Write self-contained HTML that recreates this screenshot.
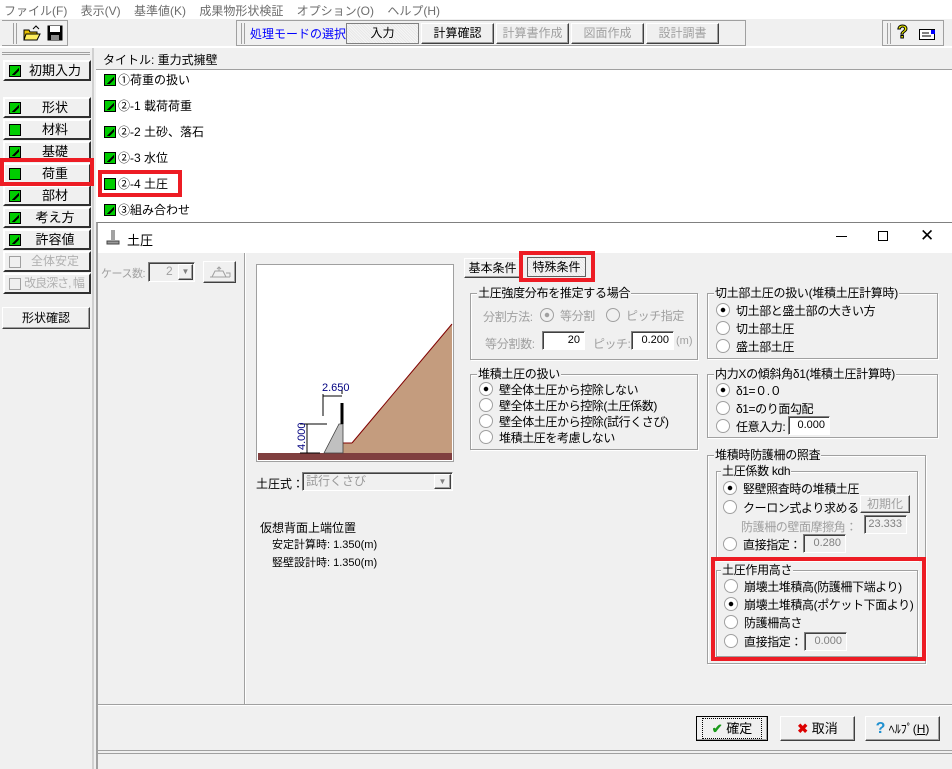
<!DOCTYPE html>
<html><head><meta charset="utf-8"><style>
*{margin:0;padding:0;box-sizing:border-box}
body{width:952px;height:769px;position:relative;overflow:hidden;background:#f0f0f0;font-family:"Liberation Sans","Noto Sans CJK JP",sans-serif;font-size:12px;color:#000}
.a{position:absolute;white-space:nowrap}
.btn{position:absolute;background:#f0f0f0;border:1px solid;border-color:#fff #404040 #404040 #fff;box-shadow:inset -1px -1px 0 #a0a0a0;text-align:center}
.lb{position:absolute;left:3px;width:88px;height:21px;background:#f0f0f0;border:2px solid #000;border-top-color:#fff;border-left-color:#fff;border-right-color:#303030;border-bottom-color:#303030;font-size:13px;line-height:17px;text-align:center;padding-left:16px}
.ck{display:inline-block;width:12px;height:12px;background:#0c0;border:1px solid #000;vertical-align:-2px;margin-right:2px;position:relative}
.ck.c::after{content:"";position:absolute;left:1px;top:1px;width:8px;height:8px;background:linear-gradient(135deg,transparent 55%,#000 55%,#000 72%,transparent 72%)}
.grp{position:absolute;border:1px solid #a0a0a0;box-shadow:1px 1px 0 #fff inset,1px 1px 0 #fff}
.grp>.t{position:absolute;top:-8px;left:6px;background:#f0f0f0;padding:0 1px;line-height:14px;letter-spacing:-0.3px}
.r{position:absolute;white-space:nowrap;line-height:14px;letter-spacing:-0.4px}
.r::before{content:"";display:inline-block;width:12px;height:12px;border-radius:50%;background:#fff;border:1px solid #a0a0a0;vertical-align:-2px;margin-right:6px}
.r.on::before{background:radial-gradient(circle,#000 2px,#fff 2.5px)}
.dis{color:#a0a0a0}
.dis.r::before{background:#f0f0f0}
.dis.r.on::before{background:radial-gradient(circle,#a0a0a0 2px,#f0f0f0 2.5px)}
.inp{position:absolute;background:#fff;border:1px solid;border-color:#808080 #fff #fff #808080;box-shadow:inset 1px 1px 0 #404040;text-align:right;padding-right:4px;line-height:17px;font-size:11px}
.inp.d{background:#f0f0f0;color:#808080}
.red{position:absolute;border:4px solid #ed1c24}
</style></head><body>
<div class="a" style="left:0;top:0;width:952px;height:19px;background:#fff"></div>
<div class="a" style="left:4px;top:2px;color:#6d6d6d;font-size:12px">ファイル(F)&nbsp;&nbsp;&nbsp;&nbsp;表示(V)&nbsp;&nbsp;&nbsp;&nbsp;基準値(K)&nbsp;&nbsp;&nbsp;&nbsp;成果物形状検証&nbsp;&nbsp;&nbsp;&nbsp;オプション(O)&nbsp;&nbsp;&nbsp;&nbsp;ヘルプ(H)</div>
<div class="a" style="left:0;top:19px;width:952px;height:29px;background:#f0f0f0;border-bottom:2px solid #fff"></div>
<div class="a" style="left:2px;top:20px;width:66px;height:26px;border:1px solid #a0a0a0;border-left:none"></div>
<div class="a" style="left:13px;top:23px;width:4px;height:21px;border-left:1px solid #a0a0a0;border-right:1px solid #a0a0a0"></div>
<svg class="a" style="left:23px;top:25px" width="18" height="16"><path d="M1 5h5l1 2h7v8H1z" fill="#e8c000" stroke="#000"/><path d="M3 9h14l-3 6H1z" fill="#ffef60" stroke="#000"/><path d="M10 4l3-3 3 3" fill="none" stroke="#000"/></svg>
<svg class="a" style="left:47px;top:25px" width="16" height="16"><rect x="0.5" y="0.5" width="15" height="15" fill="#000"/><rect x="3" y="1" width="10" height="6" fill="#fff"/><rect x="4" y="10" width="8" height="5" fill="#888"/></svg>
<div class="a" style="left:236px;top:20px;width:510px;height:26px;border:1px solid #a0a0a0"></div>
<div class="a" style="left:241px;top:23px;width:4px;height:21px;border-left:1px solid #a0a0a0;border-right:1px solid #a0a0a0"></div>
<div class="a" style="left:250px;top:25px;color:#0000ff;font-size:12px">処理モードの選択</div>
<div class="a" style="left:346px;top:23px;width:73px;height:21px;border:1px solid #808080;background:repeating-linear-gradient(45deg,#e8e8e8 0 1px,#f6f6f6 1px 2px);text-align:center;line-height:19px">入力</div>
<div class="btn" style="left:421px;top:23px;width:73px;height:21px;line-height:19px">計算確認</div>
<div class="btn" style="left:496px;top:23px;width:73px;height:21px;line-height:19px;color:#a0a0a0">計算書作成</div>
<div class="btn" style="left:571px;top:23px;width:73px;height:21px;line-height:19px;color:#a0a0a0">図面作成</div>
<div class="btn" style="left:646px;top:23px;width:73px;height:21px;line-height:19px;color:#a0a0a0">設計調書</div>
<div class="a" style="left:882px;top:20px;width:62px;height:26px;border:1px solid #a0a0a0"></div>
<div class="a" style="left:887px;top:23px;width:4px;height:21px;border-left:1px solid #a0a0a0;border-right:1px solid #a0a0a0"></div>
<div class="a" style="left:897px;top:22px;font-size:18px;font-weight:bold;color:#ee0;-webkit-text-stroke:1px #000">?</div>
<svg class="a" style="left:919px;top:29px" width="18" height="12"><rect x="0.5" y="0.5" width="15" height="10" fill="#fff" stroke="#000"/><path d="M3 4h7M3 7h9" stroke="#000"/><rect x="12" y="1" width="4" height="4" fill="#00f"/></svg>
<div class="a" style="left:0;top:48px;width:94px;height:721px;background:#f0f0f0;border-right:2px solid #d0d0d0"></div>
<div class="a" style="left:2px;top:52px;width:88px;height:3px;border-top:1px solid #a0a0a0;border-bottom:1px solid #a0a0a0"></div>
<div class="lb" style="top:60px"><span class="ck c" style="position:absolute;left:4px;top:3px"></span>初期入力</div>
<div class="lb" style="top:97px"><span class="ck c" style="position:absolute;left:4px;top:3px"></span>形状</div>
<div class="lb" style="top:119px"><span class="ck" style="position:absolute;left:4px;top:3px"></span>材料</div>
<div class="lb" style="top:141px"><span class="ck c" style="position:absolute;left:4px;top:3px"></span>基礎</div>
<div class="lb" style="top:163px"><span class="ck" style="position:absolute;left:4px;top:3px"></span>荷重</div>
<div class="lb" style="top:185px"><span class="ck c" style="position:absolute;left:4px;top:3px"></span>部材</div>
<div class="lb" style="top:207px"><span class="ck c" style="position:absolute;left:4px;top:3px"></span>考え方</div>
<div class="lb" style="top:229px"><span class="ck c" style="position:absolute;left:4px;top:3px"></span>許容値</div>
<div class="lb" style="top:251px;color:#b0b0b0;font-size:12px"><span class="ck" style="position:absolute;left:4px;top:3px;background:#f0f0f0;border-color:#a0a0a0"></span>全体安定</div>
<div class="lb" style="top:273px;color:#b0b0b0;font-size:12px;letter-spacing:-1px;padding-left:14px"><span class="ck" style="position:absolute;left:4px;top:3px;background:#f0f0f0;border-color:#a0a0a0"></span>改良深さ, 幅</div>
<div class="red" style="left:0;top:158px;width:94px;height:28px"></div>
<div class="btn" style="left:2px;top:307px;width:88px;height:22px;line-height:20px">形状確認</div>
<div class="a" style="left:96px;top:48px;width:856px;height:22px;background:#f0f0f0;border-bottom:1px solid #a0a0a0;padding:3px 7px">タイトル: 重力式擁壁</div>
<div class="a" style="left:96px;top:70px;width:856px;height:152px;background:#fff"></div>
<div class="a" style="left:104px;top:73px;line-height:14px"><span class="ck c"></span>①荷重の扱い</div>
<div class="a" style="left:104px;top:99px;line-height:14px"><span class="ck c"></span>②-1 載荷荷重</div>
<div class="a" style="left:104px;top:125px;line-height:14px"><span class="ck c"></span>②-2 土砂、落石</div>
<div class="a" style="left:104px;top:151px;line-height:14px"><span class="ck c"></span>②-3 水位</div>
<div class="a" style="left:104px;top:177px;line-height:14px"><span class="ck"></span>②-4 土圧</div>
<div class="a" style="left:104px;top:203px;line-height:14px"><span class="ck c"></span>③組み合わせ</div>
<div class="red" style="left:98px;top:170px;width:84px;height:27px"></div>
<div class="a" style="left:96px;top:222px;width:856px;height:547px;background:#f0f0f0;border-left:2px solid #a0a0a0;border-top:1px solid #808080"></div>
<div class="a" style="left:98px;top:223px;width:854px;height:30px;background:#fff"></div>
<svg class="a" style="left:105px;top:229px" width="16" height="16"><path d="M7 1v10M9 1v10" stroke="#444"/><path d="M2 12h12v3H2z" fill="#999" stroke="#444"/></svg>
<div class="a" style="left:127px;top:230px;font-size:13px">土圧</div>
<div class="a" style="left:836px;top:236px;width:11px;height:1px;background:#000"></div>
<div class="a" style="left:878px;top:231px;width:10px;height:10px;border:1px solid #000"></div>
<div class="a" style="left:920px;top:227px;font-size:17px;line-height:18px">✕</div>
<div class="a" style="left:244px;top:253px;width:2px;height:451px;border-left:1px solid #a0a0a0;border-right:1px solid #fff"></div>
<div class="a" style="left:98px;top:704px;width:854px;height:2px;border-top:1px solid #a0a0a0;border-bottom:1px solid #fff"></div>
<div class="a" style="left:98px;top:750px;width:854px;height:4px;border-top:1px solid #a0a0a0;border-bottom:1px solid #a0a0a0"></div>
<div class="a dis" style="left:101px;top:265px;font-size:11px;letter-spacing:-0.5px">ケース数:</div>
<div class="inp d" style="left:148px;top:262px;width:47px;height:20px"></div>
<div class="a dis" style="left:166px;top:264px;font-size:12px">2</div>
<div class="btn" style="left:178px;top:264px;width:15px;height:16px;font-size:8px;line-height:14px;color:#808080">▼</div>
<div class="btn" style="left:203px;top:261px;width:33px;height:22px"></div>
<svg class="a" style="left:207px;top:264px" width="26" height="16"><path d="M3 13h20M5 13l3-6h8l3 6M12 7V3M10 5l2-2 2 2M19 9h4v4" stroke="#a0a0a0" fill="none"/></svg>
<div class="a" style="left:256px;top:264px;width:198px;height:198px;background:#fff;border:1px solid #a0a0a0"></div>
<svg class="a" style="left:256px;top:264px" width="198" height="198">
<polygon points="87,179 96,179 196,60 196,189 87,189" fill="#c49c7e"/>
<polyline points="96,179 196,60" stroke="#800000" fill="none"/>
<line x1="87" y1="179" x2="96" y2="179" stroke="#800000"/>
<rect x="2" y="189" width="194" height="7" fill="#803f3f"/>
<polygon points="68,189 83,160 87,160 87,189" fill="#c0c0c0" stroke="#404040" stroke-width="0.8"/>
<line x1="86" y1="139" x2="86" y2="160" stroke="#000" stroke-width="3"/>
<path d="M67 152V130M86 130V126M67 132h19M44 160h27M44 189h20M51 160v29" stroke="#000" fill="none"/>
<text x="66" y="127" font-size="11" fill="#000080" font-family="Liberation Sans">2.650</text>
<text transform="translate(49,186) rotate(-90)" font-size="11" fill="#000080" font-family="Liberation Sans">4.000</text>
</svg>
<div class="a" style="left:256px;top:475px">土圧式：</div>
<div class="inp d" style="left:302px;top:472px;width:151px;height:19px;text-align:left;padding-left:3px;color:#999;font-size:12px">試行くさび</div>
<div class="btn" style="left:434px;top:474px;width:17px;height:15px;font-size:8px;line-height:13px;color:#808080">▼</div>
<div class="a" style="left:260px;top:519px">仮想背面上端位置</div>
<div class="a" style="left:272px;top:536px;font-size:11px">安定計算時: 1.350(m)</div>
<div class="a" style="left:272px;top:554px;font-size:11px">竪壁設計時: 1.350(m)</div>
<div class="btn" style="left:464px;top:258px;width:57px;height:20px;line-height:18px">基本条件</div>
<div class="a" style="left:527px;top:257px;width:59px;height:20px;border:1px solid #606060;background:repeating-linear-gradient(45deg,#e8e8e8 0 1px,#f6f6f6 1px 2px);text-align:center;line-height:18px">特殊条件</div>
<div class="red" style="left:519px;top:251px;width:76px;height:31px"></div>
<div class="grp" style="left:470px;top:293px;width:228px;height:67px"><div class="t">土圧強度分布を推定する場合</div></div>
<div class="a dis" style="left:483px;top:308px;letter-spacing:-0.3px">分割方法:</div>
<div class="r dis on" style="left:540px;top:308px">等分割</div>
<div class="r dis" style="left:606px;top:308px">ピッチ指定</div>
<div class="a dis" style="left:485px;top:335px;letter-spacing:-0.3px">等分割数:</div>
<div class="inp" style="left:542px;top:331px;width:43px;height:19px">20</div>
<div class="a dis" style="left:593px;top:335px;letter-spacing:-0.5px">ピッチ:</div>
<div class="inp" style="left:631px;top:331px;width:43px;height:19px">0.200</div>
<div class="a dis" style="left:676px;top:335px;font-size:11px">(m)</div>
<div class="grp" style="left:470px;top:374px;width:228px;height:76px"><div class="t">堆積土圧の扱い</div></div>
<div class="r on" style="left:479px;top:382px">壁全体土圧から控除しない</div>
<div class="r" style="left:479px;top:398px">壁全体土圧から控除(土圧係数)</div>
<div class="r" style="left:479px;top:414px">壁全体土圧から控除(試行くさび)</div>
<div class="r" style="left:479px;top:430px">堆積土圧を考慮しない</div>
<div class="grp" style="left:707px;top:293px;width:231px;height:66px"><div class="t">切土部土圧の扱い(堆積土圧計算時)</div></div>
<div class="r on" style="left:716px;top:303px">切土部と盛土部の大きい方</div>
<div class="r" style="left:716px;top:321px">切土部土圧</div>
<div class="r" style="left:716px;top:339px">盛土部土圧</div>
<div class="grp" style="left:707px;top:374px;width:231px;height:64px"><div class="t">内力Xの傾斜角δ1(堆積土圧計算時)</div></div>
<div class="r on" style="left:716px;top:383px">δ1=０.０</div>
<div class="r" style="left:716px;top:401px">δ1=のり面勾配</div>
<div class="r" style="left:716px;top:419px">任意入力:</div>
<div class="inp" style="left:788px;top:416px;width:42px;height:19px">0.000</div>
<div class="grp" style="left:707px;top:455px;width:219px;height:209px"><div class="t">堆積時防護柵の照査</div></div>
<div class="grp" style="left:716px;top:471px;width:202px;height:90px"><div class="t" style="left:4px">土圧係数 kdh</div></div>
<div class="r on" style="left:723px;top:481px">竪壁照査時の堆積土圧</div>
<div class="r" style="left:723px;top:500px">クーロン式より求める</div>
<div class="btn" style="left:860px;top:495px;width:50px;height:18px;line-height:16px;color:#a0a0a0">初期化</div>
<div class="a dis" style="left:741px;top:518px;letter-spacing:-0.4px">防護柵の壁面摩擦角：</div>
<div class="inp d" style="left:864px;top:515px;width:43px;height:19px">23.333</div>
<div class="r" style="left:723px;top:537px">直接指定：</div>
<div class="inp d" style="left:803px;top:534px;width:43px;height:19px">0.280</div>
<div class="grp" style="left:716px;top:570px;width:202px;height:87px"><div class="t" style="left:4px">土圧作用高さ</div></div>
<div class="r" style="left:724px;top:579px">崩壊土堆積高(防護柵下端より)</div>
<div class="r on" style="left:724px;top:597px">崩壊土堆積高(ポケット下面より)</div>
<div class="r" style="left:724px;top:615px">防護柵高さ</div>
<div class="r" style="left:724px;top:634px">直接指定：</div>
<div class="inp d" style="left:804px;top:632px;width:43px;height:19px">0.000</div>
<div class="red" style="left:711px;top:557px;width:215px;height:104px"></div>
<div class="btn" style="left:696px;top:716px;width:72px;height:25px;line-height:23px;font-size:13px;border-color:#000"><span style="display:inline-block;width:60px;border:1px dotted #000;line-height:19px;margin-top:1px"><span style="color:#1a9a1a;font-weight:bold">✔</span> 確定</span></div>
<div class="btn" style="left:780px;top:716px;width:75px;height:25px;line-height:23px;font-size:13px"><span style="color:#d00;font-weight:bold">✖</span> 取消</div>
<div class="btn" style="left:865px;top:716px;width:75px;height:25px;line-height:23px;font-size:12px"><span style="color:#2090d0;font-weight:bold;font-size:16px">?</span> ﾍﾙﾌﾟ(<u>H</u>)</div>
</body></html>
